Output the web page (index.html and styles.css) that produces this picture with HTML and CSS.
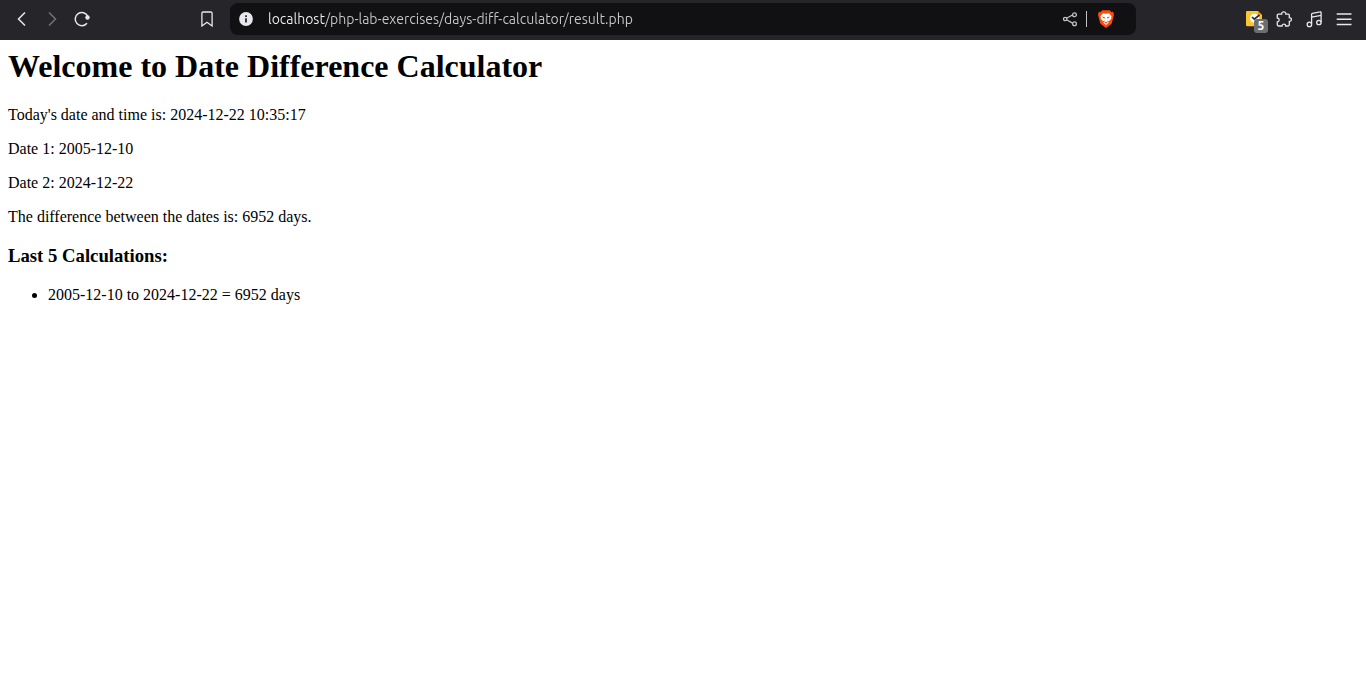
FILE: index.html
```html
<!DOCTYPE html>
<html lang="en">
<head>
<meta charset="utf-8">
<meta name="viewport" content="width=device-width, initial-scale=1">
<title>Date Difference Calculator</title>
<link rel="stylesheet" href="styles.css">
</head>
<body>
<header class="toolbar">
  <nav class="group" aria-label="Navigation">
    <button class="tool" type="button" aria-label="Back"><svg class="icon" viewBox="0 0 18 18"><path d="M12 2.500 5.500 9l6.500 6.500" stroke-width="1.500"/></svg></button>
    <button class="tool dim" type="button" aria-label="Forward"><svg class="icon" viewBox="0 0 18 18"><path d="M6 2.500 12.500 9 6 15.500" stroke-width="1.500"/></svg></button>
    <button class="tool" type="button" aria-label="Reload"><svg class="icon" viewBox="0 0 18 18"><path d="M14 13.200A6.600 6.600 0 1 1 14.800 6.300" stroke-width="1.500"/><circle cx="14.500" cy="7.500" r="2.200" class="solid"/></svg></button>
    <button class="tool bookmark" type="button" aria-label="Bookmark"><svg class="icon" viewBox="0 0 18 18"><path d="M3.900 3.200a1.200 1.200 0 0 1 1.200-1.200h7.800a1.200 1.200 0 0 1 1.200 1.200v12.800L9 12.200l-5.100 3.800z" stroke-width="1.300"/></svg></button>
  </nav>
  <div class="address">
    <button class="tool info" type="button" aria-label="Site information"><svg class="icon" viewBox="0 0 18 18"><circle cx="9" cy="9" r="6.900" class="solid"/><path d="M9 8.200v4.300M9 5.300v1.700" class="ink" stroke-width="1.600"/></svg></button>
    <input class="url" type="text" aria-label="Address" value="localhost/php-lab-exercises/days-diff-calculator/result.php">
    <button class="tool share" type="button" aria-label="Share"><svg class="icon" viewBox="0 0 18 18"><path d="M5.500 8.300 11.500 5M5.500 9.700l6 3.400" stroke-width="1.300"/><circle cx="4.200" cy="9" r="1.700" stroke-width="1.300"/><circle cx="13.500" cy="4.700" r="1.900" stroke-width="1.300"/><circle cx="13.500" cy="13.700" r="1.900" stroke-width="1.300"/></svg></button>
    <span class="divider"></span>
    <button class="tool" type="button" aria-label="Shields"><svg class="icon" viewBox="0 0 18 18"><path d="M5.300.3h7.400l1.600 1.600 1.800-.1L17 4.600l-.5 2.200-1.900 7L9 18l-5.600-4.200-1.900-7L1 4.600l.9-2.800 1.800.1z" fill="#ff4a0c" stroke="none"/><path d="M6 3.200 9 3.700l3-.5 2.600 3-.5 1.400.2 1.200-2.500 2.500-1.400-.9.300 1.300 1.200.7L9 15l-2.900-2.600 1.200-.7.300-1.300-1.400.9-2.500-2.500.2-1.200-.5-1.400z" fill="#fff" stroke="none"/><path d="m5 6.500 3 .7-.3 1.400-1.200-.3zM13 6.500l-3 .7.300 1.400 1.200-.3zM7.300 11.300 9 12.200l1.700-.9-.4 1.400L9 13.400l-1.300-.7z" fill="#ff4a0c" stroke="none"/></svg></button>
  </div>
  <div class="group end">
    <button class="tool extension" type="button" aria-label="Tasks extension, 5"><svg class="icon" viewBox="0 0 18 18"><path d="M2.200 1h10.600L17 5v10.500a.7.7 0 0 1-.7.700H2.200A1.200 1.200 0 0 1 1 15V2.200A1.200 1.200 0 0 1 2.200 1z" fill="#fbc62f" stroke="none"/><path d="M12.800 1 17 5h-4.200z" fill="#f29900" stroke="none"/><circle cx="9.600" cy="8.300" r="4.600" fill="#fff" stroke="none"/><path d="m7 7 2.300 2.200L14.500 5" stroke="#29272e" stroke-width="1.700"/></svg><span class="badge">5</span></button>
    <button class="tool" type="button" aria-label="Extensions"><svg class="icon" viewBox="0 0 18 18"><path d="M3.300 4.200h3.400c-.5-3.200 4.600-3.200 4.100 0h2.500a1 1 0 0 1 1 1v2.500c2.800-.2 2.800 3.900 0 3.700v3.300a1.300 1.300 0 0 1-1.300 1.300h-2.300c0-2.400-3.700-2.400-3.700 0H3.600a1.300 1.300 0 0 1-1.300-1.300v-2.900c2.500-.1 2.500-3.700 0-3.800V5.200a1 1 0 0 1 1-1z" stroke-width="1.300"/></svg></button>
    <button class="tool" type="button" aria-label="Media playlist"><svg class="icon" viewBox="0 0 18 18"><path d="M6.600 14.200V4.300a1 1 0 0 1 .8-1l7.700-1.500a.8.800 0 0 1 1 .8v9.700M6.600 7.200l9.500-1.900" stroke-width="1.300"/><circle cx="4.400" cy="14.400" r="2.200" stroke-width="1.300"/><circle cx="13.900" cy="12.500" r="2.200" stroke-width="1.300"/></svg></button>
    <button class="tool" type="button" aria-label="Menu"><svg class="icon" viewBox="0 0 18 18"><path d="M1.700 4h14.800M1.700 9.200h14.800M1.700 14.500h14.800" stroke-width="1.400"/></svg></button>
  </div>
</header>
<main class="page">
  <h1 class="title">Welcome to Date Difference Calculator</h1>
  <p class="line">Today's date and time is: 2024-12-22 10:35:17</p>
  <p class="line">Date 1: 2005-12-10</p>
  <p class="line">Date 2: 2024-12-22</p>
  <p class="line">The difference between the dates is: 6952 days.</p>
  <h3 class="subtitle">Last 5 Calculations:</h3>
  <ul class="history">
    <li>2005-12-10 to 2024-12-22 = 6952 days</li>
  </ul>
</main>
</body>
</html>
```

FILE: styles.css
```css
body {
  margin: 0;
  background: #fff;
  color: #000;
  font-family: "Liberation Serif", serif;
  font-size: 16px;
  line-height: 18px;
}

.toolbar {
  display: grid;
  grid-template-columns: 230px 1fr 230px;
  align-items: center;
  box-sizing: border-box;
  height: 40px;
  padding-bottom: 2px;
  background: #26252a;
}

.group {
  display: flex;
  padding: 0 8px 0 7px;
}

.end {
  justify-content: flex-end;
  padding: 0 7px;
}

.tool {
  display: flex;
  flex: none;
  align-items: center;
  justify-content: center;
  position: relative;
  width: 30px;
  height: 32px;
  padding: 0;
  border: 0;
  background: none;
  color: #e8e8ec;
}

.dim {
  color: #737278;
}

.bookmark {
  margin-left: auto;
}

.icon {
  width: 18px;
  height: 18px;
  fill: none;
  stroke: currentColor;
}

.icon .solid {
  fill: currentColor;
  stroke: none;
}

.icon .ink {
  stroke: #111113;
}

.address {
  display: flex;
  align-items: center;
  box-sizing: border-box;
  min-width: 0;
  height: 32px;
  padding: 0 15px 0 1px;
  border-radius: 8px;
  background: #111113;
}

.url {
  flex: 1;
  min-width: 0;
  height: 32px;
  margin-left: 7px;
  padding: 0;
  border: 0;
  outline: 0;
  background: linear-gradient(90deg, #f4f4f8 57px, #cacace 57px);
  background-clip: text;
  -webkit-background-clip: text;
  color: transparent;
  font-family: Ubuntu, "Noto Sans", sans-serif;
  font-size: 14px;
}

.share {
  color: #c0c0c5;
}

.divider {
  width: 1px;
  height: 16px;
  margin: 0 4px 0 1px;
  background: #c0c0c5;
}

.badge {
  position: absolute;
  right: 1px;
  bottom: 2px;
  width: 14px;
  height: 14px;
  border-radius: 3px;
  background: #6e6e70;
  color: #fff;
  font: bold 12px/14px Ubuntu, "Noto Sans", sans-serif;
  text-align: center;
}

.page {
  padding: 8px;
}

.title {
  margin: 0 0 21px;
  font-size: 32px;
  line-height: 37px;
}

.line {
  margin: 0 0 16px;
}

.subtitle {
  margin: 19px 0;
  line-height: 22px;
}

.history {
  margin: 0;
  padding-left: 40px;
}
```
